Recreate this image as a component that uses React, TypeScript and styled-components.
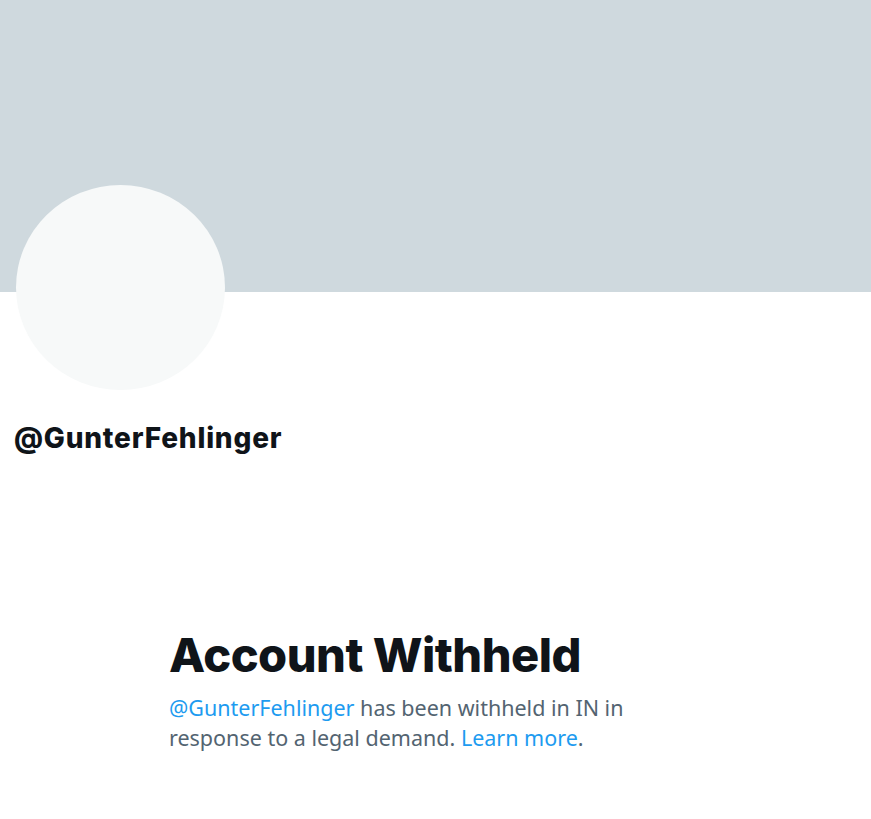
import React from "react";
import styled, { createGlobalStyle } from "styled-components";

const Global = createGlobalStyle`
  html, body { margin: 0; padding: 0; background: #ffffff; }
  body { font-family: Inter, "Noto Sans", sans-serif; }
`;

const Page = styled.div`
  width: 871px;
  min-height: 819px;
  background: #ffffff;
  display: flex;
  flex-direction: column;
`;

const Banner = styled.div`
  height: 292px;
  background: #cfd9de;
`;

const ProfileHeader = styled.div`
  display: flex;
  flex-direction: column;
  align-items: flex-start;
  padding: 0 0 0 16px;
  margin-top: -107px;
`;

const Avatar = styled.div`
  width: 209px;
  height: 205px;
  border-radius: 50%;
  background: #f7f9f9;
`;

const Handle = styled.div`
  margin: 30px 0 0 -2px;
  font-family: Inter, sans-serif;
  font-weight: 800;
  font-size: 28px;
  line-height: 36px;
  letter-spacing: 0.8px;
  color: #0f1419;
`;

const Notice = styled.div`
  margin-top: 171px;
  padding-left: 169px;
  display: flex;
  flex-direction: column;
`;

const Title = styled.h1`
  margin: 0;
  font-family: Inter, sans-serif;
  font-weight: 800;
  font-size: 47px;
  line-height: 56px;
  letter-spacing: -0.5px;
  color: #0f1419;
`;

const Body = styled.p`
  margin: 10px 0 0;
  max-width: 470px;
  font-family: "Noto Sans", sans-serif;
  font-size: 21.5px;
  line-height: 30px;
  color: #536471;
`;

const Link = styled.a`
  color: #1d9bf0;
  text-decoration: none;
`;

export default function App() {
  return (
    <>
      <Global />
      <Page>
        <Banner />
        <ProfileHeader>
          <Avatar />
          <Handle>@GunterFehlinger</Handle>
        </ProfileHeader>
        <Notice>
          <Title>Account Withheld</Title>
          <Body>
            <Link href="#">@GunterFehlinger</Link> has been withheld in IN in response to a legal demand.{" "}
            <Link href="#">Learn more</Link>.
          </Body>
        </Notice>
      </Page>
    </>
  );
}
